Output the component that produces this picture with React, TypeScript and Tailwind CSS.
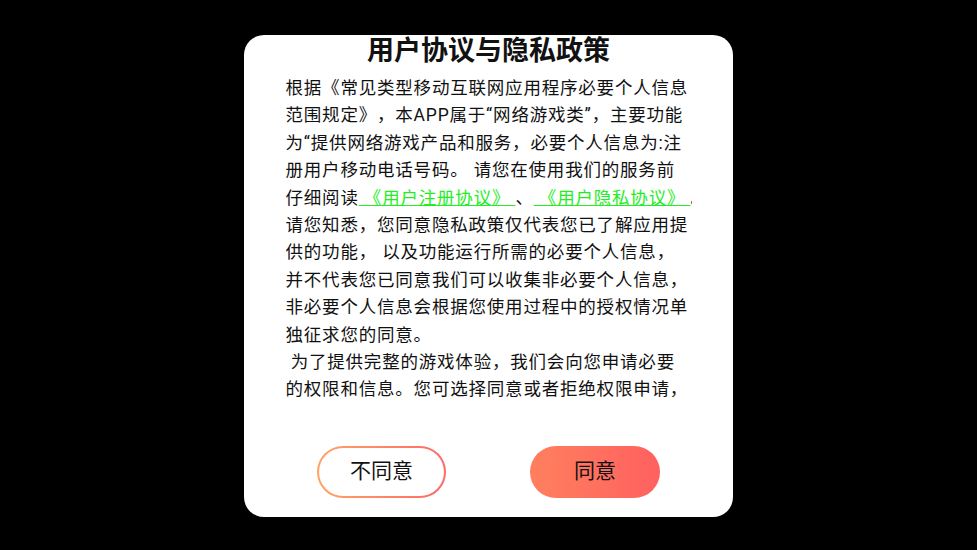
import React from 'react';

const lines: React.ReactNode[] = [
  '根据《常见类型移动互联网应用程序必要个人信息',
  '范围规定》，本APP属于“网络游戏类”，主要功能',
  '为“提供网络游戏产品和服务，必要个人信息为:注',
  '册用户移动电话号码。 请您在使用我们的服务前',
  <>
    仔细阅读
    <span className="text-[#22ee22] underline decoration-[#22ee22]"> 《用户注册协议》 </span>、
    <span className="text-[#22ee22] underline decoration-[#22ee22]"> 《用户隐私协议》 </span>。
  </>,
  '请您知悉，您同意隐私政策仅代表您已了解应用提',
  '供的功能， 以及功能运行所需的必要个人信息，',
  '并不代表您已同意我们可以收集非必要个人信息，',
  '非必要个人信息会根据您使用过程中的授权情况单',
  '独征求您的同意。',
  '\u00a0为了提供完整的游戏体验，我们会向您申请必要',
  '的权限和信息。您可选择同意或者拒绝权限申请，',
  '如果拒绝可能会导致部分游戏功能无法使用。',
];

export default function App() {
  return (
    <div
      className="w-[977px] h-[550px] bg-black flex justify-center pt-[35px]"
      style={{ fontFamily: 'Roboto, "Noto Sans CJK SC", sans-serif' }}
    >
      <div className="w-[489px] h-[482px] bg-white rounded-[20px] flex flex-col items-center">
        <h1 className="text-[27px] leading-[34px] font-semibold text-[#111] -mt-[1px]">用户协议与隐私政策</h1>
        <div className="w-[406px] h-[325px] mt-[7px] overflow-hidden text-[17.5px] tracking-[0.8px] leading-[27.4px] text-[#111] whitespace-nowrap [text-spacing-trim:space-all]">
          {lines.map((l, i) => (
            <div key={i}>{l}</div>
          ))}
        </div>
        <div className="flex gap-[84px] mt-[46px]">
          <button className="w-[129px] h-[52px] rounded-full p-[2px] bg-gradient-to-r from-[#ffa366] to-[#ff6767]">
            <span className="w-full h-full rounded-full bg-white flex items-center justify-center text-[21px] text-[#111]">
              不同意
            </span>
          </button>
          <button className="w-[130px] h-[52px] rounded-full bg-gradient-to-r from-[#ff7f5e] to-[#ff6060] flex items-center justify-center text-[21px] text-[#111]">
            同意
          </button>
        </div>
      </div>
    </div>
  );
}
